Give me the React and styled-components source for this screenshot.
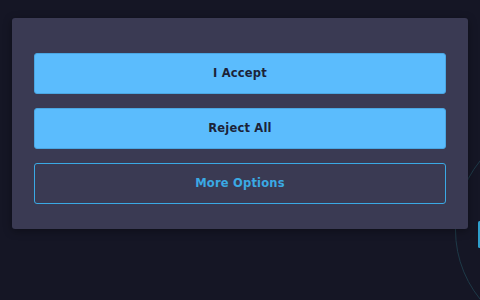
import styled, { createGlobalStyle } from 'styled-components';

const GlobalStyle = createGlobalStyle`
  html, body {
    margin: 0;
    padding: 0;
    background: #151625;
  }
  body {
    font-family: "DejaVu Sans", "Open Sans", sans-serif;
  }
`

const Page = styled.div`
  position: relative;
  width: 480px;
  height: 300px;
  overflow: hidden;
  background: #151625;
  padding: 18px 12px 0 12px;
  box-sizing: border-box;
`

// decorative ring peeking in from the right edge
const Ring = styled.div`
  position: absolute;
  left: 455px;
  top: 120px;
  width: 220px;
  height: 220px;
  border-radius: 50%;
  border: 1.5px solid #1e3a48;
  box-sizing: border-box;
`

const Glow = styled.div`
  position: absolute;
  left: 478px;
  top: 221px;
  width: 3px;
  height: 27px;
  border-radius: 2px;
  background: #2f9fcc;
`

const Panel = styled.div`
  position: relative;
  display: flex;
  flex-direction: column;
  gap: 14px;
  width: 456px;
  box-sizing: border-box;
  padding: 35px 22px 25px 22px;
  background: #3a3a53;
  border-radius: 3px;
  box-shadow: 0 2px 8px rgba(0, 0, 0, 0.35);
`

const ConsentButton = styled.button`
  height: 41px;
  width: 100%;
  box-sizing: border-box;
  padding: 0 0 2px 0;
  border-radius: 3px;
  font-family: "DejaVu Sans", "Open Sans", sans-serif;
  font-size: 11.5px;
  font-weight: 600;
  letter-spacing: 0.2px;
  cursor: pointer;
  background: ${p => p.$outline ? 'transparent' : '#5bbcfd'};
  color: ${p => p.$outline ? '#3aa9e4' : '#1c2338'};
  border: 1px solid ${p => p.$outline ? '#3aa9e4' : '#4aa6e2'};
`

export default function App() {
  return (
    <>
      <GlobalStyle />
      <Page>
        <Ring />
        <Glow />
        <Panel>
          <ConsentButton>I Accept</ConsentButton>
          <ConsentButton>Reject All</ConsentButton>
          <ConsentButton $outline>More Options</ConsentButton>
        </Panel>
      </Page>
    </>
  )
}
